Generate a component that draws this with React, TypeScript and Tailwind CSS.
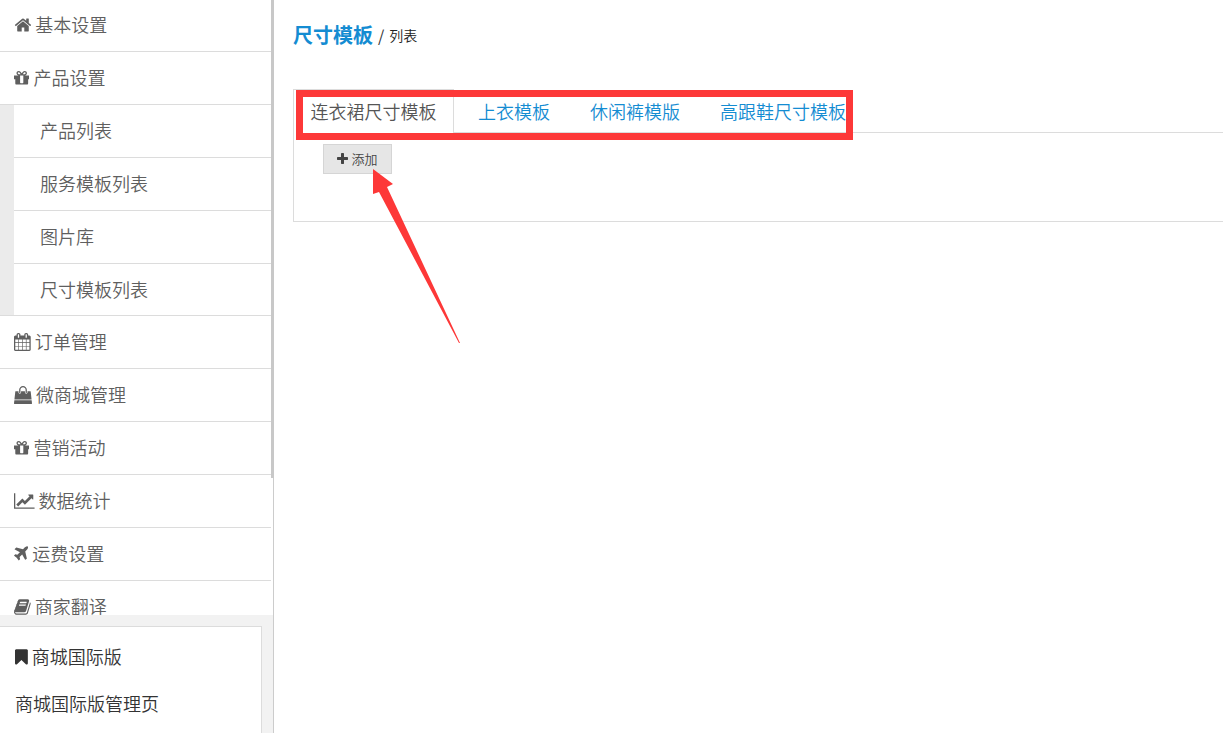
import { useState } from 'react';

const icons = {
    home: {
        viewBox: '0 0 1728 1792',
        d: 'M1472 992v480q0 26-19 45t-45 19h-384v-384h-256v384h-384q-26 0-45-19t-19-45v-480q0-1 .5-3t.5-3l575-474 575 474q1 2 1 6zm223-69l-62 74q-8 9-21 11h-3q-13 0-21-7l-692-577-692 577q-12 8-24 7-13-2-21-11l-62-74q-8-10-7-23.5t11-21.5l719-599q32-26 76-26t76 26l244 204v-195q0-14 9-23t23-9h192q14 0 23 9t9 23v408l219 182q10 8 11 21.5t-7 23.5z',
    },
    gift: {
        viewBox: '128 0 1536 1792',
        d: 'M1056 1356v-716h-320v716q0 25 18 38.5t46 13.5h192q28 0 46-13.5t18-38.5zm-456-844h195l-126-161q-26-31-69-31-40 0-68 28t-28 68 28 68 68 28zm688-96q0-40-28-68t-68-28q-43 0-69 31l-125 161h194q40 0 68-28t28-68zm376 256v320q0 14-9 23t-23 9h-96v416q0 40-28 68t-68 28h-1088q-40 0-68-28t-28-68v-416h-96q-14 0-23-9t-9-23v-320q0-14 9-23t23-9h440q-93 0-158.5-65.5t-65.5-158.5 65.5-158.5 158.5-65.5q107 0 168 77l128 165 128-165q61-77 168-77 93 0 158.5 65.5t65.5 158.5-65.5 158.5-158.5 65.5h440q14 0 23 9t9 23z',
    },
    calendar: {
        viewBox: '64 0 1664 1792',
        d: 'M192 1664h288v-288h-288v288zm352 0h320v-288h-320v288zm-352-352h288v-320h-288v320zm352 0h320v-320h-320v320zm-352-384h288v-288h-288v288zm736 736h320v-288h-320v288zm-384-736h320v-288h-320v288zm768 736h288v-288h-288v288zm-384-352h320v-320h-320v320zm-352-864v-288q0-13-9.5-22.5t-22.5-9.5h-64q-13 0-22.5 9.5t-9.5 22.5v288q0 13 9.5 22.5t22.5 9.5h64q13 0 22.5-9.5t9.5-22.5zm736 864h288v-320h-288v320zm-384-384h320v-288h-320v288zm384 0h288v-288h-288v288zm32-480v-288q0-13-9.5-22.5t-22.5-9.5h-64q-13 0-22.5 9.5t-9.5 22.5v288q0 13 9.5 22.5t22.5 9.5h64q13 0 22.5-9.5t9.5-22.5zm384-64v1280q0 52-38 90t-90 38h-1408q-52 0-90-38t-38-90v-1280q0-52 38-90t90-38h128v-96q0-66 47-113t113-47h64q66 0 113 47t47 113v96h384v-96q0-66 47-113t113-47h64q66 0 113 47t47 113v96h128q52 0 90 38t38 90z',
    },
    bag: {
        viewBox: '0 0 1792 1792',
        d: 'M1757 1408l35 313q3 28-16 50-19 21-48 21h-1664q-29 0-48-21-19-22-16-50l35-313h1722zm-93-839l86 775h-1708l86-775q3-24 21-40.5t43-16.5h256v128q0 53 37.5 90.5t90.5 37.5 90.5-37.5 37.5-90.5v-128h384v128q0 53 37.5 90.5t90.5 37.5 90.5-37.5 37.5-90.5v-128h256q25 0 43 16.5t21 40.5zm-384-185v256q0 26-19 45t-45 19-45-19-19-45v-256q0-106-75-181t-181-75-181 75-75 181v256q0 26-19 45t-45 19-45-19-19-45v-256q0-159 112.5-271.5t271.5-112.5 271.5 112.5 112.5 271.5z',
    },
    chart: {
        viewBox: '0 0 2048 1792',
        d: 'M2048 1536v128h-2048v-1536h128v1408h1920zM1920 288v435q0 21-19.5 29.5t-35.5-7.5l-121-121-633 633q-10 10-23 10t-23-10l-233-233-416 416-192-192 585-585q10-10 23-10t23 10l233 233 464-464-121-121q-16-16-7.5-35.5t29.5-19.5h435q14 0 23 9t9 23z',
    },
    plane: {
        viewBox: '192 0 1408 1792',
        d: 'M1568 160q44 52 12 148t-108 172l-161 161 160 696q5 19-12 33l-128 96q-7 6-19 6-4 0-7-1-15-3-21-16l-279-508-259 259 53 194q5 17-8 31l-96 96q-9 9-23 9h-2q-15-2-24-13l-189-252-252-189q-11-7-13-23-1-13 9-25l96-97q9-9 23-9 6 0 8 1l194 53 259-259-508-279q-14-8-17-24-2-16 9-27l128-128q14-13 30-8l665 159 160-160q76-76 172-108t148 12z',
    },
    book: {
        viewBox: '64 0 1664 1792',
        d: 'M1703 478q40 57 18 129l-275 906q-19 64-76.5 107.5t-122.5 43.5h-923q-77 0-148.5-53.5t-99.5-131.5q-24-67-2-127 0-4 3-27t4-37q1-8-3-21.5t-3-19.5q2-11 8-21t16.5-23.5 16.5-23.5q23-38 45-91.5t30-91.5q3-10 .5-30t-.5-28q3-11 17-28t17-23q21-36 42-92t25-90q1-9-2.5-32t.5-28q4-13 22-30.5t22-22.5q19-26 42.5-84.5t27.5-96.5q1-8-3-25.5t-2-26.5q2-8 9-18t18-23 17-21q8-12 16.5-30.5t15-35 16-36 19.5-32 26.5-23.5 36-11.5 47.5 5.5l-1 3q38-9 51-9h761q74 0 114 56t18 130l-274 906q-36 119-71.5 153.5t-128.5 34.5h-869q-27 0-38 15-11 16-1 43 24 70 144 70h923q29 0 56-15.5t35-41.5l300-987q7-22 5-57 38 15 59 43zm-1064 2q-4 13 2 22.5t20 9.5h608q13 0 25.5-9.5t16.5-22.5l21-64q4-13-2-22.5t-20-9.5h-608q-13 0-25.5 9.5t-16.5 22.5zm-83 256q-4 13 2 22.5t20 9.5h608q13 0 25.5-9.5t16.5-22.5l21-64q4-13-2-22.5t-20-9.5h-608q-13 0-25.5 9.5t-16.5 22.5z',
    },
    bookmark: {
        viewBox: '256 0 1280 1792',
        d: 'M1420 128q23 0 44 9 33 13 52.5 41t19.5 62v1289q0 34-19.5 62t-52.5 41q-19 8-44 8-48 0-83-32l-441-424-441 424q-36 33-83 33-23 0-44-9-33-13-52.5-41t-19.5-62v-1289q0-34 19.5-62t52.5-41q21-9 44-9h1048z',
    },
    plus: {
        viewBox: '192 0 1408 1792',
        d: 'M1600 736v192q0 40-28 68t-68 28h-416v416q0 40-28 68t-68 28h-192q-40 0-68-28t-28-68v-416h-416q-40 0-68-28t-28-68v-192q0-40 28-68t68-28h416v-416q0-40 28-68t68-28h192q40 0 68 28t28 68v416h416q40 0 68 28t28 68z',
    },
};

type IconName = keyof typeof icons;

type MenuItem = {
    label: string;
    icon: IconName;
    children?: string[];
};

const menu: MenuItem[] = [
    { label: '基本设置', icon: 'home' },
    { label: '产品设置', icon: 'gift', children: ['产品列表', '服务模板列表', '图片库', '尺寸模板列表'] },
    { label: '订单管理', icon: 'calendar' },
    { label: '微商城管理', icon: 'bag' },
    { label: '营销活动', icon: 'gift' },
    { label: '数据统计', icon: 'chart' },
    { label: '运费设置', icon: 'plane' },
    { label: '商家翻译', icon: 'book' },
];

const tabs = ['连衣裙尺寸模板', '上衣模板', '休闲裤模版', '高跟鞋尺寸模板'];

function Icon({ name, className }: { name: IconName; className: string }) {
    return (
        <svg viewBox={icons[name].viewBox} className={`w-auto shrink-0 fill-current ${className}`} aria-hidden="true">
            <path d={icons[name].d} />
        </svg>
    );
}

function Sidebar() {
    return (
        <aside className="relative flex w-[274px] shrink-0 flex-col border-r border-[#ccc] bg-[#f2f2f2]">
            <nav className="min-h-0 flex-1 overflow-hidden bg-white text-[#5f5f5f]">
                <ul className="-mt-px mr-[2px]">
                    {menu.map((item) => (
                        <li key={item.label}>
                            <a href="#" className="flex h-[53px] items-center gap-1 border-b border-[#dcdcdc] pb-[2px] pl-[14px]">
                                <Icon name={item.icon} className="mt-[2px] h-[18px]" />
                                {item.label}
                            </a>
                            {item.children && (
                                <ul className="border-b border-[#dcdcdc] bg-[#ebebeb] pl-[14px]">
                                    {item.children.map((child) => (
                                        <li key={child} className="h-[53px] border-b border-[#dcdcdc] bg-white last:h-[51px] last:border-b-0">
                                            <a href="#" className="flex h-[50px] items-center pl-[26px]">
                                                {child}
                                            </a>
                                        </li>
                                    ))}
                                </ul>
                            )}
                        </li>
                    ))}
                </ul>
            </nav>
            <div className="mt-[11px] mr-[11px] h-[107px] border-t border-r border-[#dcdcdc] bg-white pt-[6px] pl-[15px] text-[#333]">
                <a href="#" className="flex h-[47px] items-center gap-1 pb-[2px]">
                    <Icon name="bookmark" className="mt-[2px] h-[18px]" />
                    商城国际版
                </a>
                <a href="#" className="flex h-[47px] items-center pb-[2px]">
                    商城国际版管理页
                </a>
            </div>
            {/* scroll thumb */}
            <div className="absolute top-0 -right-px h-[478px] w-[3px] bg-[#c8c8c8]" />
        </aside>
    );
}

export default function App() {
    const [active, setActive] = useState(0);

    return (
        <div className="flex h-screen overflow-hidden bg-white font-['Noto_Sans_CJK_SC',sans-serif] text-[18px] leading-6 font-[350]">
            <Sidebar />

            <main className="min-w-0 flex-1 pt-[20px] pl-[19px]">
                <h1 className="flex h-[30px] items-center text-[20px] leading-[30px] font-bold text-[#148cd2]">
                    尺寸模板
                    <span className="ml-[5px] text-[16px] font-normal text-[#333]">/</span>
                    <small className="ml-[5px] text-[14px] font-[350] text-[#222]">列表</small>
                </h1>

                <section className="relative mt-[39px] h-[133px] border-b border-l border-[#dcdcdc]">
                    <div role="tablist" className="flex h-11">
                        {tabs.map((tab, i) => (
                            <button
                                key={tab}
                                role="tab"
                                aria-selected={active === i}
                                onClick={() => setActive(i)}
                                className={
                                    active === i
                                        ? 'mr-[-1px] w-[160px] shrink-0 border-t border-r border-[#dcdcdc] pb-[2px] text-center text-[#555]'
                                        : 'shrink-0 border-b border-[#dcdcdc] px-5 text-[#148cd2] nth-2:pl-[25px]'
                                }
                            >
                                {tab}
                            </button>
                        ))}
                        <div className="flex-1 border-b border-[#dcdcdc]" />
                    </div>
                    <button className="mt-[11px] ml-[29px] flex h-[30px] w-[69px] items-center justify-center gap-[3px] border border-[#d5d5d5] bg-[#e6e6e6] text-[13px] text-[#444]">
                        <Icon name="plus" className="h-[14px]" />
                        添加
                    </button>

                    {/* highlight around the tabs and pointer to the add button */}
                    <div className="pointer-events-none absolute top-px left-[2px] h-[50px] w-[557px] border-[7px] border-[#fd3838]" />
                    <svg viewBox="0 0 88 175" className="pointer-events-none absolute top-[80px] left-[79px] h-[175px] w-[88px] fill-[#fd3838]">
                        <path d="M0 0L20 15L14 18L87 174L86 174L6 23L0 25Z" />
                    </svg>
                </section>
            </main>
        </div>
    );
}
